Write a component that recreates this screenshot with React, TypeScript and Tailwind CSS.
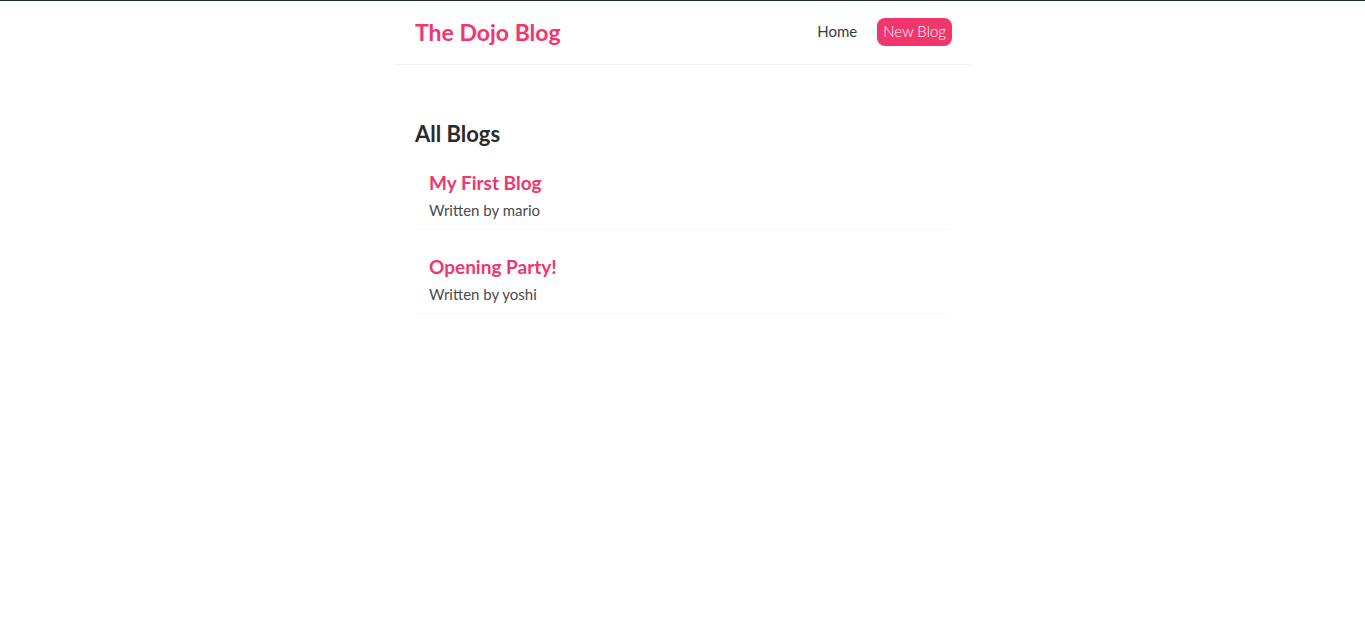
const blogs = [
  { id: 1, title: "My First Blog", author: "mario" },
  { id: 2, title: "Opening Party!", author: "yoshi" },
];

export default function App() {
  return (
    <div className="min-h-screen bg-white border-t border-[#1e2a2e] text-[#333] font-['Lato','Noto_Sans',sans-serif]">
      {/* Navbar */}
      <nav className="w-[575px] mx-auto h-[64px] pl-5 pr-[18px] flex items-center border-b border-[#f2f2f2]">
        <h1 className="text-[23px] font-bold text-[#f1356d]">The Dojo Blog</h1>
        <div className="ml-auto mb-[2px] flex items-center">
          <a href="/" className="text-[15px] text-[#3a3a3a] px-1.5 py-1">
            Home
          </a>
          <a
            href="/create"
            className="ml-[14px] h-[28px] px-[6px] flex items-center rounded-lg bg-[#f1356d] text-white text-[15px] font-light"
          >
            New Blog
          </a>
        </div>
      </nav>

      {/* Content */}
      <main className="w-[575px] mx-auto px-[19px] pt-[55px]">
        <h2 className="pl-px text-[22px] leading-[28px] font-bold text-[#2b2b2b]">All Blogs</h2>
        <div className="mt-[13px] flex flex-col gap-[15px]">
          {blogs.map((blog) => (
            <div key={blog.id} className="pt-[10px] pb-[7px] px-[15px] border-b border-[#fafafa]">
              <h3 className="text-[19px] leading-[24px] font-bold text-[#f1356d]">{blog.title}</h3>
              <p className="mt-[3px] text-[15px] leading-[24px] text-[#4a4a4a]">Written by {blog.author}</p>
            </div>
          ))}
        </div>
      </main>
    </div>
  );
}
